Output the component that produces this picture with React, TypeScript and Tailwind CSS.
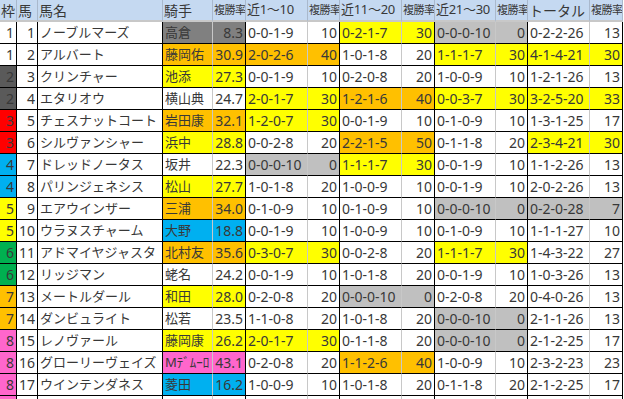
import React from 'react'

type Fill = 'w' | 'y' | 'o' | 'g' | 'd' | 'b' | 'p'

const fills: Record<Fill, string> = {
  w: 'bg-white',
  y: 'bg-[#ffff00]',
  o: 'bg-[#ffc000]',
  g: 'bg-[#c0c0c0]',
  d: 'bg-[#808080]',
  b: 'bg-[#00b0f0]',
  p: 'bg-[#ff66cc]',
}

const wakuFill: Record<number, string> = {
  1: 'bg-white',
  2: 'bg-[#5a5a5a]',
  3: 'bg-[#ff0000]',
  4: 'bg-[#00b0f0]',
  5: 'bg-[#ffff00]',
  6: 'bg-[#00b050]',
  7: 'bg-[#ffc000]',
  8: 'bg-[#ff66cc]',
}

type Rec = [string, string, Fill]
type Horse = { w: number; n: number; name: string; j: string; jr: string; jf: Fill; recs: Rec[] }

const horses: Horse[] = [
  { w: 1, n: 1, name: 'ノーブルマーズ', j: '高倉', jr: '8.3', jf: 'd', recs: [['0-0-1-9', '10', 'w'], ['0-2-1-7', '30', 'y'], ['0-0-0-10', '0', 'g'], ['0-2-2-26', '13', 'w']] },
  { w: 1, n: 2, name: 'アルバート', j: '藤岡佑', jr: '30.9', jf: 'o', recs: [['2-0-2-6', '40', 'o'], ['1-0-1-8', '20', 'w'], ['1-1-1-7', '30', 'y'], ['4-1-4-21', '30', 'y']] },
  { w: 2, n: 3, name: 'クリンチャー', j: '池添', jr: '27.3', jf: 'y', recs: [['0-0-1-9', '10', 'w'], ['0-2-0-8', '20', 'w'], ['1-0-0-9', '10', 'w'], ['1-2-1-26', '13', 'w']] },
  { w: 2, n: 4, name: 'エタリオウ', j: '横山典', jr: '24.7', jf: 'w', recs: [['2-0-1-7', '30', 'y'], ['1-2-1-6', '40', 'o'], ['0-0-3-7', '30', 'y'], ['3-2-5-20', '33', 'y']] },
  { w: 3, n: 5, name: 'チェスナットコート', j: '岩田康', jr: '32.1', jf: 'o', recs: [['1-2-0-7', '30', 'y'], ['0-0-1-9', '10', 'w'], ['0-1-0-9', '10', 'w'], ['1-3-1-25', '17', 'w']] },
  { w: 3, n: 6, name: 'シルヴァンシャー', j: '浜中', jr: '28.8', jf: 'y', recs: [['0-0-2-8', '20', 'w'], ['2-2-1-5', '50', 'o'], ['0-1-1-8', '20', 'w'], ['2-3-4-21', '30', 'y']] },
  { w: 4, n: 7, name: 'ドレッドノータス', j: '坂井', jr: '22.3', jf: 'w', recs: [['0-0-0-10', '0', 'g'], ['1-1-1-7', '30', 'y'], ['0-0-1-9', '10', 'w'], ['1-1-2-26', '13', 'w']] },
  { w: 4, n: 8, name: 'パリンジェネシス', j: '松山', jr: '27.7', jf: 'y', recs: [['1-0-1-8', '20', 'w'], ['1-0-0-9', '10', 'w'], ['0-0-1-9', '10', 'w'], ['2-0-2-26', '13', 'w']] },
  { w: 5, n: 9, name: 'エアウインザー', j: '三浦', jr: '34.0', jf: 'o', recs: [['0-1-0-9', '10', 'w'], ['0-1-0-9', '10', 'w'], ['0-0-0-10', '0', 'g'], ['0-2-0-28', '7', 'g']] },
  { w: 5, n: 10, name: 'ウラヌスチャーム', j: '大野', jr: '18.8', jf: 'b', recs: [['0-0-1-9', '10', 'w'], ['1-0-0-9', '10', 'w'], ['0-1-0-9', '10', 'w'], ['1-1-1-27', '10', 'w']] },
  { w: 6, n: 11, name: 'アドマイヤジャスタ', j: '北村友', jr: '35.6', jf: 'o', recs: [['0-3-0-7', '30', 'y'], ['0-0-2-8', '20', 'w'], ['1-1-1-7', '30', 'y'], ['1-4-3-22', '27', 'w']] },
  { w: 6, n: 12, name: 'リッジマン', j: '蛯名', jr: '24.2', jf: 'w', recs: [['0-0-1-9', '10', 'w'], ['1-0-1-8', '20', 'w'], ['0-0-1-9', '10', 'w'], ['1-0-3-26', '13', 'w']] },
  { w: 7, n: 13, name: 'メートルダール', j: '和田', jr: '28.0', jf: 'y', recs: [['0-2-0-8', '20', 'w'], ['0-0-0-10', '0', 'g'], ['0-2-0-8', '20', 'w'], ['0-4-0-26', '13', 'w']] },
  { w: 7, n: 14, name: 'ダンビュライト', j: '松若', jr: '23.5', jf: 'w', recs: [['1-1-0-8', '20', 'w'], ['1-0-1-8', '20', 'w'], ['0-0-0-10', '0', 'g'], ['2-1-1-26', '13', 'w']] },
  { w: 8, n: 15, name: 'レノヴァール', j: '藤岡康', jr: '26.2', jf: 'y', recs: [['2-0-1-7', '30', 'y'], ['0-1-1-8', '20', 'w'], ['0-0-0-10', '0', 'g'], ['2-1-2-25', '17', 'w']] },
  { w: 8, n: 16, name: 'グローリーヴェイズ', j: 'Mﾃﾞﾑｰﾛ', jr: '43.1', jf: 'p', recs: [['0-2-0-8', '20', 'w'], ['1-1-2-6', '40', 'o'], ['1-0-0-9', '10', 'w'], ['2-3-2-23', '23', 'w']] },
  { w: 8, n: 17, name: 'ウインテンダネス', j: '菱田', jr: '16.2', jf: 'b', recs: [['1-0-0-9', '10', 'w'], ['1-0-1-8', '20', 'w'], ['0-1-1-8', '20', 'w'], ['2-1-2-25', '17', 'w']] },
]

const headers = ['枠', '馬', '馬名', '騎手', '複勝率', '近1～10', '複勝率', '近11～20', '複勝率', '近21～30', '複勝率', 'トータル', '複勝率']

// 右側が黒線になる列
const darkRight = [true, true, true, false, true, false, true, false, true, false, true, false, true]

function Cell({ i, fill, right, children }: { i: number; fill: string; right?: boolean; children?: React.ReactNode }) {
  return (
    <div
      className={`h-[22px] flex items-center overflow-hidden whitespace-nowrap border-b border-black border-r text-[14px]
        ${darkRight[i] ? 'border-r-black' : 'border-r-[#c8c8c8]'} ${fill}
        ${right ? 'justify-end pr-[2px]' : 'pl-[2px]'}`}
    >
      {children}
    </div>
  )
}

function headerSize(h: string) {
  if (h === '複勝率') return 'text-[11px] tracking-[-0.5px]'
  if (h.startsWith('近')) return 'text-[13px] tracking-[-0.3px]'
  return 'text-[14px]'
}

export default function App() {
  return (
    <div className="w-[624px] h-[399px] overflow-hidden bg-white text-[#383838] font-['Noto_Sans','Noto_Sans_CJK_JP',sans-serif]">
      <div className="grid grid-cols-[17px_21px_125px_50px_33px_62px_32px_62px_33px_61px_32px_62px_33px]">
        {headers.map((h, i) => (
          <div
            key={i}
            className={`h-[22px] flex items-center overflow-hidden whitespace-nowrap bg-[#c5d9f1] border-r border-r-[#a9b8cc] border-b-2 border-b-[#c8c8c8] pl-[1px] ${headerSize(h)}`}
          >
            {h}
          </div>
        ))}

        {horses.map(r => (
          <React.Fragment key={r.n}>
            <Cell i={0} fill={wakuFill[r.w]} right>{r.w}</Cell>
            <Cell i={1} fill="bg-white" right>{r.n}</Cell>
            <Cell i={2} fill="bg-white">
              <span className="text-[13px]">{r.name}</span>
            </Cell>
            <Cell i={3} fill={fills[r.jf]}>
              <span className="text-[13px]">{r.j}</span>
            </Cell>
            <Cell i={4} fill={fills[r.jf]} right>{r.jr}</Cell>
            {r.recs.map((rec, k) => (
              <React.Fragment key={k}>
                <Cell i={5 + k * 2} fill={fills[rec[2]]}>{rec[0]}</Cell>
                <Cell i={6 + k * 2} fill={fills[rec[2]]} right>{rec[1]}</Cell>
              </React.Fragment>
            ))}
          </React.Fragment>
        ))}

        {/* 18番（見切れ） */}
        <Cell i={0} fill={wakuFill[8]} right />
        {Array.from({ length: 12 }).map((_, k) => (
          <Cell key={k} i={k + 1} fill="bg-white" />
        ))}
      </div>
    </div>
  )
}
